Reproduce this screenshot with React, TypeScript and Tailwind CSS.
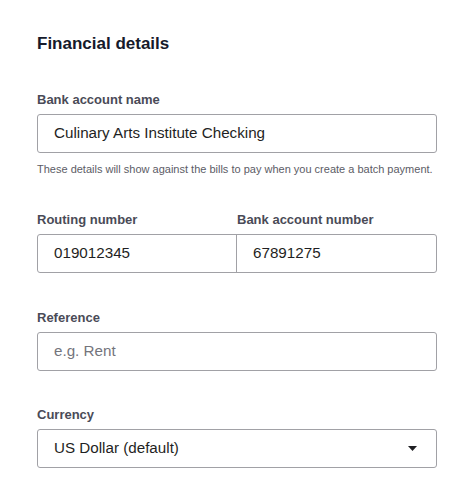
export default function App() {
  return (
    <div className="min-h-screen bg-white font-['Liberation_Sans',Arial,sans-serif]">
      <div className="w-[400px] ml-[37px] pt-[34px]">
        <h2 className="text-[17px] leading-5 font-bold text-[#161a2b]">Financial details</h2>

        <div className="mt-[38px]">
          <label className="block text-[13px] leading-4 font-bold text-[#4a4b57]">Bank account name</label>
          <div className="mt-[6px] h-[39px] flex items-center rounded-[3px] border border-[#a1a1a6] px-4 text-[15.2px] text-[#1f1f23]">
            Culinary Arts Institute Checking
          </div>
          <p className="mt-[9px] text-[11px] leading-[14px] text-[#5c5c66]">
            These details will show against the bills to pay when you create a batch payment.
          </p>
        </div>

        <div className="mt-[36px]">
          <div className="grid grid-cols-2">
            <label className="block text-[13px] leading-4 font-bold text-[#4a4b57]">Routing number</label>
            <label className="block text-[13px] leading-4 font-bold text-[#4a4b57]">Bank account number</label>
          </div>
          <div className="mt-[6px] h-[39px] grid grid-cols-2 rounded-[3px] border border-[#a1a1a6] text-[15.2px] text-[#1f1f23]">
            <div className="flex items-center px-4">019012345</div>
            <div className="flex items-center border-l border-[#a1a1a6] px-4 -ml-px">67891275</div>
          </div>
        </div>

        <div className="mt-[37px]">
          <label className="block text-[13px] leading-4 font-bold text-[#4a4b57]">Reference</label>
          <div className="mt-[6px] h-[39px] flex items-center rounded-[3px] border border-[#a1a1a6] px-4 text-[15.2px] text-[#74747c]">
            e.g. Rent
          </div>
        </div>

        <div className="mt-[36px]">
          <label className="block text-[13px] leading-4 font-bold text-[#4a4b57]">Currency</label>
          <div className="mt-[6px] h-[39px] flex items-center justify-between rounded-[3px] border border-[#a1a1a6] pl-4 pr-[19px] text-[15.2px] text-[#1f1f23]">
            <span>US Dollar (default)</span>
            <svg width="9" height="5" viewBox="0 0 9 5" className="fill-[#1f1f23]">
              <path d="M0 0h9L4.5 5z" />
            </svg>
          </div>
        </div>
      </div>
    </div>
  );
}
